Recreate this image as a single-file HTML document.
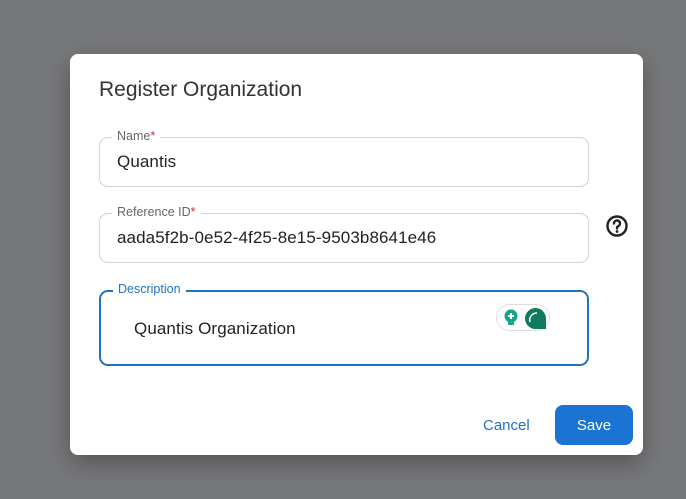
<!DOCTYPE html>
<html><head><style>
*{box-sizing:border-box;margin:0;padding:0}
body{width:686px;height:499px;background:#77787a;font-family:"Liberation Sans",sans-serif;position:relative;overflow:hidden}
.dlg{position:absolute;left:70px;top:54px;width:573px;height:401px;background:#fff;border-radius:8px;box-shadow:0 8px 24px rgba(0,0,0,.3)}
h1{position:absolute;left:29px;top:24px;font-size:21px;font-weight:normal;color:#333}
.f{position:absolute;left:29px;width:490px;border:1px solid #d4d4d4;border-radius:9px}
.lbl{position:absolute;left:12px;top:-9px;background:#fff;padding:0 5px;font-size:12.5px;color:#666}
.lbl b{color:#d32f2f;font-weight:normal}
.v{position:absolute;left:17px;font-size:17px;color:#222;letter-spacing:.1px}
</style></head><body>
<div class="dlg">
<h1>Register Organization</h1>
<div class="f" style="top:83px;height:50px"><span class="lbl">Name<b>*</b></span><span class="v" style="top:14px">Quantis</span></div>
<div class="f" style="top:159px;height:50px"><span class="lbl">Reference ID<b>*</b></span><span class="v" style="top:14px">aada5f2b-0e52-4f25-8e15-9503b8641e46</span></div>
<svg style="position:absolute;left:535px;top:160px" width="24" height="24" viewBox="0 0 24 24"><circle cx="12" cy="12" r="9.5" fill="none" stroke="#222" stroke-width="2.4"/><path d="M9 9.5a3 3 0 1 1 4.2 2.7c-.8.4-1.2 1-1.2 1.8v.5" fill="none" stroke="#222" stroke-width="2.4" stroke-linecap="round"/><circle cx="12" cy="17.5" r="1.4" fill="#222"/></svg>
<div class="f" style="top:236px;height:76px;border:2px solid #1f72c4"><span class="lbl" style="color:#1f72c4;top:-10px">Description</span><span class="v" style="left:33px;top:27px">Quantis Organization</span>
<div style="position:absolute;left:395px;top:12px;width:54px;height:27px;border:1px solid #ddd;border-radius:14px;background:#fff">
<svg style="position:absolute;left:6px;top:4px" width="16" height="18" viewBox="0 0 16 18"><circle cx="8" cy="7" r="6.5" fill="#15a589"/><rect x="5" y="12" width="6" height="4" rx="1" fill="#15a589"/><path d="M8 4v6M5 7h6" stroke="#fff" stroke-width="2"/></svg>
<svg style="position:absolute;left:27px;top:2px" width="23" height="23" viewBox="0 0 23 23"><path d="M11.5 1a10.5 10.5 0 0 1 10.5 10.5V22H11.5A10.5 10.5 0 0 1 11.5 1z" fill="#0e7a5e"/><path d="M6 15a7 7 0 0 1 7-9" fill="none" stroke="#fff" stroke-width="1.6"/></svg>
</div></div>
<span style="position:absolute;left:413px;top:363px;font-size:15px;color:#1f72c4">Cancel</span>
<div style="position:absolute;left:485px;top:351px;width:78px;height:40px;background:#1b74d4;border-radius:8px;color:#fff;font-size:15px;text-align:center;line-height:42px">Save</div>
</div>
</body></html>
